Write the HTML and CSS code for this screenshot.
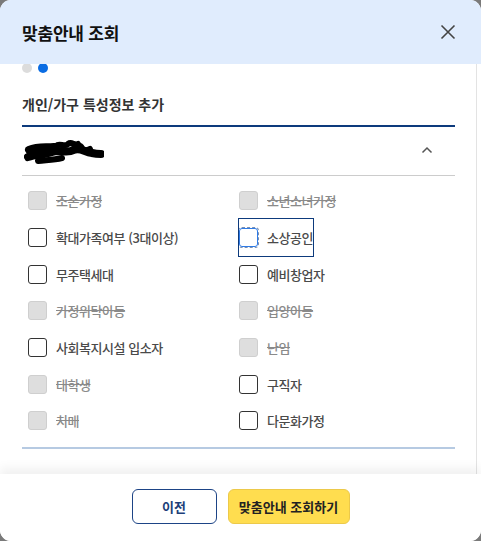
FILE: index.html
```html
<!DOCTYPE html>
<html lang="ko">
<head>
<meta charset="utf-8">
<title>맞춤안내 조회</title>
<link rel="stylesheet" href="styles.css">
</head>
<body>
<div class="modal">
  <header class="modal-head">
    <h1 class="modal-title">맞춤안내 조회</h1>
    <button class="close" aria-label="닫기">
      <svg width="16" height="16" viewBox="0 0 16 16"><path d="M1.5 1.5 L14.5 14.5 M14.5 1.5 L1.5 14.5" stroke="#444" stroke-width="1.6" fill="none"/></svg>
    </button>
  </header>
  <div class="modal-body">
    <div class="steps"><span class="dot"></span><span class="dot on"></span></div>
    <h2 class="section-title">개인/가구 특성정보 추가</h2>
    <div class="acc">
      <div class="acc-head">
        <svg class="redact" width="80" height="28" viewBox="0 0 80 28">
          <path d="M5 12 C14 8 22 10 30 9" stroke="#000" stroke-width="8" stroke-linecap="round" fill="none"/>
          <path d="M4 19 C12 16 20 17 28 14 C36 11 42 16 50 12 C56 9 60 14 68 15 C72 16 76 16 77 16" stroke="#000" stroke-width="8" stroke-linecap="round" fill="none"/>
          <path d="M14 23 C22 22 30 22 38 20" stroke="#000" stroke-width="6" stroke-linecap="round" fill="none"/>
          <path d="M32 8 C36 4 40 10 44 6 C48 3 50 8 54 6" stroke="#000" stroke-width="6" stroke-linecap="round" fill="none"/>
          <path d="M48 12 C52 8 56 6 58 10 C60 14 64 12 66 11" stroke="#000" stroke-width="6" stroke-linecap="round" fill="none"/>
        </svg>
        <svg class="chev" width="12" height="8" viewBox="0 0 12 8"><path d="M1.5 6.5 L6 2 L10.5 6.5" stroke="#555" stroke-width="1.5" fill="none"/></svg>
      </div>
      <div class="opts">
        <label class="opt dis"><span class="cb"></span><span class="txt">조손가정</span></label>
        <label class="opt dis"><span class="cb"></span><span class="txt">소년소녀가정</span></label>
        <label class="opt"><span class="cb"></span><span class="txt">확대가족여부 (3대이상)</span></label>
        <label class="opt focus"><span class="cb"></span><span class="txt">소상공인</span></label>
        <label class="opt"><span class="cb"></span><span class="txt">무주택세대</span></label>
        <label class="opt"><span class="cb"></span><span class="txt">예비창업자</span></label>
        <label class="opt dis"><span class="cb"></span><span class="txt">가정위탁아동</span></label>
        <label class="opt dis"><span class="cb"></span><span class="txt">입양아동</span></label>
        <label class="opt"><span class="cb"></span><span class="txt">사회복지시설 입소자</span></label>
        <label class="opt dis"><span class="cb"></span><span class="txt">난임</span></label>
        <label class="opt dis"><span class="cb"></span><span class="txt">대학생</span></label>
        <label class="opt"><span class="cb"></span><span class="txt">구직자</span></label>
        <label class="opt dis"><span class="cb"></span><span class="txt">치매</span></label>
        <label class="opt"><span class="cb"></span><span class="txt">다문화가정</span></label>
      </div>
      <div class="acc-end"></div>
    </div>
  </div>
  <footer class="modal-foot">
    <button class="btn prev">이전</button>
    <button class="btn go">맞춤안내 조회하기</button>
  </footer>
</div>
</body>
</html>
```
FILE: styles.css
```css
html, body {
  margin: 0;
  padding: 0;
  height: 100%;
}
body {
  background: #7a7a7a;
  font-family: "Noto Sans CJK KR", "Noto Sans", sans-serif;
  overflow: hidden;
}
.modal {
  height: 541px;
  width: 481px;
  background: #fff;
  border-radius: 11px;
  overflow: hidden;
  display: flex;
  flex-direction: column;
}
.modal-head {
  height: 64px;
  flex: none;
  background: #e0ecfd;
  display: flex;
  align-items: center;
  justify-content: space-between;
  padding: 0 22px;
  position: relative;
  z-index: 1;
}
.modal-title {
  margin: 0;
  font-size: 17px;
  font-weight: 700;
  color: #111;
  letter-spacing: -0.2px;
}
.close {
  border: 0;
  background: none;
  padding: 0;
  width: 16px;
  height: 16px;
  margin-right: 3px;
}
.close svg { display: block; }
.modal-body {
  flex: 1;
  overflow: hidden;
  padding: 0 22px 0 22px;
  border-right: 3px solid #fff;
  box-shadow: inset -1px 0 0 #e3e3e3;
  margin-right: 1px;
}
.steps {
  display: flex;
  gap: 6px;
  height: 10px;
}
.dot {
  width: 10px;
  height: 10px;
  border-radius: 50%;
  background: #dcdcdc;
  margin-top: -1px;
}
.dot.on { background: #0a6ce3; }
.section-title {
  margin: 19px 0 0 0;
  font-size: 14px;
  line-height: 22px;
  font-weight: 700;
  color: #333;
  padding-bottom: 10px;
  border-bottom: 2px solid #0d3a7c;
}
.acc-head {
  height: 48px;
  display: flex;
  align-items: center;
  justify-content: space-between;
  border-bottom: 1px solid #cccccc;
  padding: 0 22px 0 2px;
}
.redact { display: block; margin-top: 2px; }
.chev { display: block; margin-top: -3px; }
.opts {
  display: grid;
  grid-template-columns: 211px 211px;
  grid-auto-rows: 36.67px;
  padding: 6.5px 0 0 6px;
}
.opt {
  display: flex;
  align-items: center;
  align-self: stretch;
  justify-self: start;
  gap: 9px;
  font-size: 13px;
  font-weight: 500;
  color: #4a4a4a;
  letter-spacing: -0.45px;
}
.cb {
  box-sizing: border-box;
  width: 19px;
  height: 19px;
  border: 1px solid #333;
  border-radius: 3px;
  background: #fff;
  flex: none;
}
.opt.dis .cb {
  background: #dedede;
  border-color: #cfcfcf;
}
.opt.dis .txt {
  color: #8a8a8a;
  text-decoration: line-through;
}
.opt.focus {
  outline: 1px solid #0d3a7c;
}
.opt.focus .cb {
  border: 1px solid #2f7be6;
  outline: 1px dashed #7a8fb0;
}
.acc-end {
  margin-top: 8px;
  border-bottom: 2px solid #b6cae2;
}
.modal-foot {
  height: 67px;
  flex: none;
  display: flex;
  justify-content: center;
  align-items: flex-start;
  gap: 11px;
  padding-top: 15px;
  box-sizing: border-box;
  background: #fff;
  box-shadow: 0 -6px 10px rgba(0,0,0,0.06);
  position: relative;
}
.btn {
  height: 35px;
  border-radius: 6px;
  font-family: "Noto Sans CJK KR", "Noto Sans", sans-serif;
  font-size: 13px;
  font-weight: 700;
  padding: 0;
  box-sizing: border-box;
}
.btn.prev {
  width: 85px;
  background: #fff;
  border: 1.5px solid #1d4486;
  color: #1d3f7a;
}
.btn.go {
  width: 122px;
  background: #ffdd4f;
  border: 1px solid #ecc94a;
  color: #222;
}
```
